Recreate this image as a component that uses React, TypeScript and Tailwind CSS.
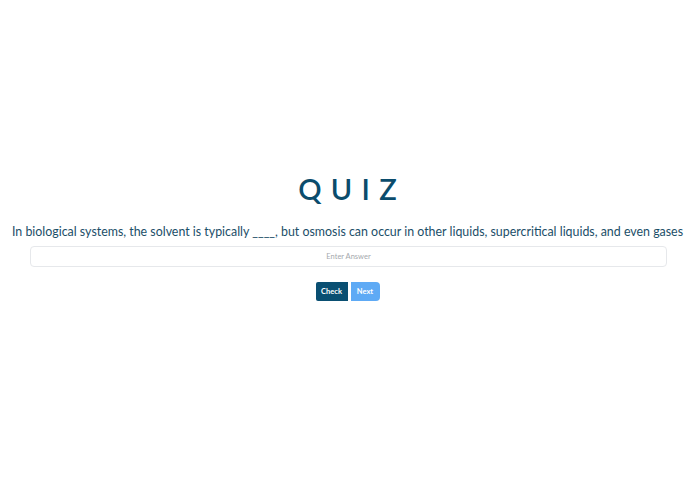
import React from "react";

export default function App() {
  return (
    <div className="min-h-screen w-full bg-white flex flex-col items-center justify-center" style={{ fontFamily: "Lato, 'Noto Sans', sans-serif" }}>
      <div className="flex flex-col items-center w-full -mt-[19px]">
        <h1 className="text-[29px] leading-none font-semibold tracking-[0.32em] pl-[0.32em] text-[#0b4c6c]">QUIZ</h1>
        <p className="mt-[23px] text-[12.4px] leading-none text-[#1b4e68] whitespace-nowrap">
          In biological systems, the solvent is typically ____, but osmosis can occur in other liquids, supercritical liquids, and even gases
        </p>
        <div className="mt-[2px] w-full pl-[30px] pr-[28px]">
          <input
            placeholder="Enter Answer"
            className="w-full h-[21px] rounded-[4px] border border-[#e6e8eb] text-center text-[7.5px] placeholder:text-[#a5a9ae] outline-none"
          />
        </div>
        <div className="mt-[15px] flex gap-[3px]">
          <button className="h-[19px] w-[32px] bg-[#0a4f72] text-white text-[7.5px] font-bold rounded-l-[2px]">Check</button>
          <button className="h-[19px] w-[29px] bg-[#5eaaf5] text-white text-[7.5px] font-bold rounded-r-[4px]">Next</button>
        </div>
      </div>
    </div>
  );
}
